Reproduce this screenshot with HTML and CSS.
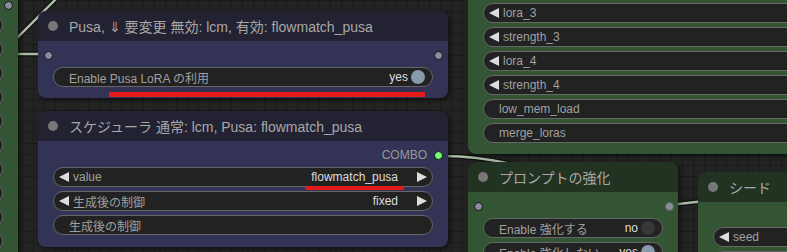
FILE: index.html
```html
<!DOCTYPE html>
<html lang="ja">
<head>
    <meta charset="UTF-8" />
    <meta name="viewport" content="width=device-width, initial-scale=1.0"/>
    <title>ComfyUI ワークフロー</title>
    <link rel="stylesheet" href="styles.css">
</head>
<body>
    <div class="lienzo">
        <!-- enlaces entre nodos -->
        <svg class="enlaces" width="787" height="252" viewBox="0 0 787 252">
            <g class="enlace-borde">
                <path d="M -5 60 L 62 -7" />
                <path d="M 10 54 L 46 54" />
                <path d="M 443 156 Q 480 156 520 166" />
                <path d="M 669 205 L 705 201" />
            </g>
            <g class="enlace">
                <path d="M -5 60 L 62 -7" />
                <path d="M 10 54 L 46 54" />
                <path d="M 443 156 Q 480 156 520 166" />
                <path d="M 669 205 L 705 201" />
            </g>
        </svg>

        <div class="nodo nodo-verde nodo-izquierdo">
            <div class="cuerpo">
                <div class="ranuras">
                    <span></span>
                    <span class="punto"></span>
                </div>
                <div class="widgets">
                    <div class="widget"></div>
                    <div class="widget"></div>
                    <div class="widget"></div>
                    <div class="widget"></div>
                    <div class="widget"></div>
                    <div class="widget"></div>
                    <div class="widget"></div>
                    <div class="widget"></div>
                    <div class="widget"></div>
                    <div class="widget"></div>
                    <div class="widget"></div>
                </div>
            </div>
        </div>

        <div class="nodo nodo-verde nodo-loras">
            <div class="cuerpo">
                <div class="widgets">
                    <div class="widget"><span class="flecha-izq"></span><span class="etiqueta">lora_3</span></div>
                    <div class="widget"><span class="flecha-izq"></span><span class="etiqueta">strength_3</span></div>
                    <div class="widget"><span class="flecha-izq"></span><span class="etiqueta">lora_4</span></div>
                    <div class="widget"><span class="flecha-izq"></span><span class="etiqueta">strength_4</span></div>
                    <div class="widget"><span class="etiqueta">low_mem_load</span></div>
                    <div class="widget"><span class="etiqueta">merge_loras</span></div>
                </div>
            </div>
        </div>

        <div class="nodo nodo-azul nodo-pusa">
            <div class="titulo"><span class="punto-titulo"></span>Pusa, ⇓ 要変更 無効: lcm, 有効: flowmatch_pusa</div>
            <div class="cuerpo">
                <div class="ranuras">
                    <span class="punto"></span>
                    <span class="punto"></span>
                </div>
                <div class="widgets">
                    <div class="widget">
                        <span class="etiqueta">Enable Pusa LoRA の利用</span>
                        <span class="valor">yes</span>
                        <span class="interruptor activo"></span>
                    </div>
                </div>
            </div>
        </div>

        <div class="nodo nodo-azul nodo-planificador">
            <div class="titulo"><span class="punto-titulo"></span>スケジューラ 通常: lcm, Pusa: flowmatch_pusa</div>
            <div class="cuerpo">
                <div class="ranuras ranuras-derecha">
                    <span class="salida">COMBO</span>
                    <span class="punto punto-combo"></span>
                </div>
                <div class="widgets">
                    <div class="widget">
                        <span class="flecha-izq"></span>
                        <span class="etiqueta">value</span>
                        <span class="valor valor-combo">flowmatch_pusa</span>
                        <span class="flecha-der"></span>
                    </div>
                    <div class="widget">
                        <span class="flecha-izq"></span>
                        <span class="etiqueta">生成後の制御</span>
                        <span class="valor valor-combo">fixed</span>
                        <span class="flecha-der"></span>
                    </div>
                    <div class="widget">
                        <span class="etiqueta">生成後の制御</span>
                    </div>
                </div>
            </div>
        </div>

        <div class="nodo nodo-verde nodo-prompt">
            <div class="titulo"><span class="punto-titulo"></span>プロンプトの強化</div>
            <div class="cuerpo">
                <div class="ranuras">
                    <span class="punto"></span>
                    <span class="punto punto-plano"></span>
                </div>
                <div class="widgets">
                    <div class="widget">
                        <span class="etiqueta">Enable 強化する</span>
                        <span class="valor">no</span>
                        <span class="interruptor"></span>
                    </div>
                    <div class="widget">
                        <span class="etiqueta">Enable 強化しない</span>
                        <span class="valor">yes</span>
                        <span class="interruptor activo"></span>
                    </div>
                </div>
            </div>
        </div>

        <div class="nodo nodo-verde nodo-semilla">
            <div class="titulo"><span class="punto-titulo"></span>シード</div>
            <div class="cuerpo">
                <div class="ranuras"></div>
                <div class="widgets">
                    <div class="widget"><span class="flecha-izq"></span><span class="etiqueta">seed</span></div>
                    <div class="widget"></div>
                </div>
            </div>
        </div>

        <div class="marca marca-pusa"></div>
        <div class="marca marca-valor"></div>
    </div>
</body>
</html>
```

FILE: styles.css
```css
* {
    margin: 0;
    padding: 0;
    box-sizing: border-box;
}

body {
    font-family: "Liberation Sans", Arial, "Noto Sans CJK JP", sans-serif;
    background: #222222;
}

.lienzo {
    position: relative;
    width: 787px;
    height: 252px;
    overflow: hidden;
    background-color: #232323;
    background-image:
        linear-gradient(#1b1b1b 1px, transparent 1px),
        linear-gradient(90deg, #1b1b1b 1px, transparent 1px);
    background-size: 11px 11px;
}

.enlaces {
    position: absolute;
    left: 0;
    top: 0;
}

.enlaces path {
    fill: none;
    stroke-linecap: round;
}

.enlace-borde path {
    stroke: rgba(0, 0, 0, 0.6);
    stroke-width: 5;
}

.enlace path {
    stroke: #aabba5;
    stroke-width: 2.5;
}

.nodo {
    position: absolute;
    border-radius: 8px;
    box-shadow: 2px 2px 4px rgba(0, 0, 0, 0.5);
}

.nodo-azul .titulo {
    background: #222233;
}

.nodo-azul .cuerpo {
    background: #333355;
}

.nodo-verde .titulo {
    background: #223322;
}

.nodo-verde .cuerpo {
    background: #335533;
}

.titulo {
    height: 30px;
    display: flex;
    align-items: center;
    gap: 11px;
    padding-left: 10px;
    border-radius: 8px 8px 0 0;
    font-size: 14px;
    color: #a8a8a8;
    white-space: nowrap;
}

.punto-titulo {
    width: 10px;
    height: 10px;
    border-radius: 50%;
    background: #777777;
    flex-shrink: 0;
}

.cuerpo {
    padding: 4px 15px 11px;
    border-radius: 0 0 8px 8px;
}

.nodo > .cuerpo:first-child {
    border-radius: 8px;
}

.ranuras {
    height: 20px;
    margin: 0 -15px;
    padding: 0 5px 0 6px;
    display: flex;
    justify-content: space-between;
    align-items: center;
}

.ranuras-derecha {
    justify-content: flex-end;
    gap: 7px;
}

.salida {
    font-size: 12px;
    color: #999999;
}

.punto {
    width: 9px;
    height: 9px;
    border-radius: 50%;
    background: #8a8aa0;
    border: 1px solid #111111;
}

.punto-combo {
    background: #77ff77;
}

.punto-plano {
    border-color: #5a6a5a;
}

.widgets {
    margin-top: 2px;
    display: flex;
    flex-direction: column;
    gap: 4px;
}

.widget {
    height: 20px;
    padding: 0 15px;
    display: flex;
    align-items: center;
    border: 1px solid #666666;
    border-radius: 10px;
    background: #222222;
    font-size: 12px;
    color: #a0a0a0;
    white-space: nowrap;
}

.etiqueta {
    flex: 1;
}

.valor {
    color: #dddddd;
    margin-right: 3px;
}

.valor-combo {
    margin-right: 19px;
}

.flecha-izq,
.flecha-der {
    width: 0;
    height: 0;
    border-top: 5px solid transparent;
    border-bottom: 5px solid transparent;
    flex-shrink: 0;
}

.flecha-izq {
    border-right: 10px solid #dddddd;
    margin: 0 4px 0 -10px;
}

.flecha-der {
    border-left: 10px solid #dddddd;
    margin-right: -10px;
}

.interruptor {
    width: 14px;
    height: 14px;
    border-radius: 50%;
    background: #383838;
    margin-right: -8px;
    flex-shrink: 0;
}

.interruptor.activo {
    background: #8899aa;
}

/* posiciones en el lienzo */
.nodo-izquierdo {
    left: -400px;
    top: -9px;
    width: 418px;
}

.nodo-izquierdo .widgets {
    margin-top: 0;
}

.nodo-loras {
    left: 468px;
    top: -20px;
    width: 400px;
}

.nodo-loras .cuerpo {
    padding-top: 21px;
}

.nodo-pusa {
    left: 38px;
    top: 11px;
    width: 410px;
}

.nodo-planificador {
    left: 38px;
    top: 111px;
    width: 410px;
}

.nodo-planificador .cuerpo {
    padding-bottom: 12px;
}

.nodo-prompt {
    left: 468px;
    top: 162px;
    width: 210px;
}

.nodo-prompt .ranuras {
    padding-right: 4px;
}

.nodo-semilla {
    left: 698px;
    top: 172px;
    width: 200px;
}

.nodo-semilla .cuerpo {
    padding-top: 3px;
}

.marca {
    position: absolute;
    background: #e41b1b;
}

.marca-pusa {
    left: 109px;
    top: 92px;
    width: 316px;
    height: 5px;
}

.marca-valor {
    left: 305px;
    top: 186px;
    width: 99px;
    height: 4px;
    border-radius: 2px;
}
```
